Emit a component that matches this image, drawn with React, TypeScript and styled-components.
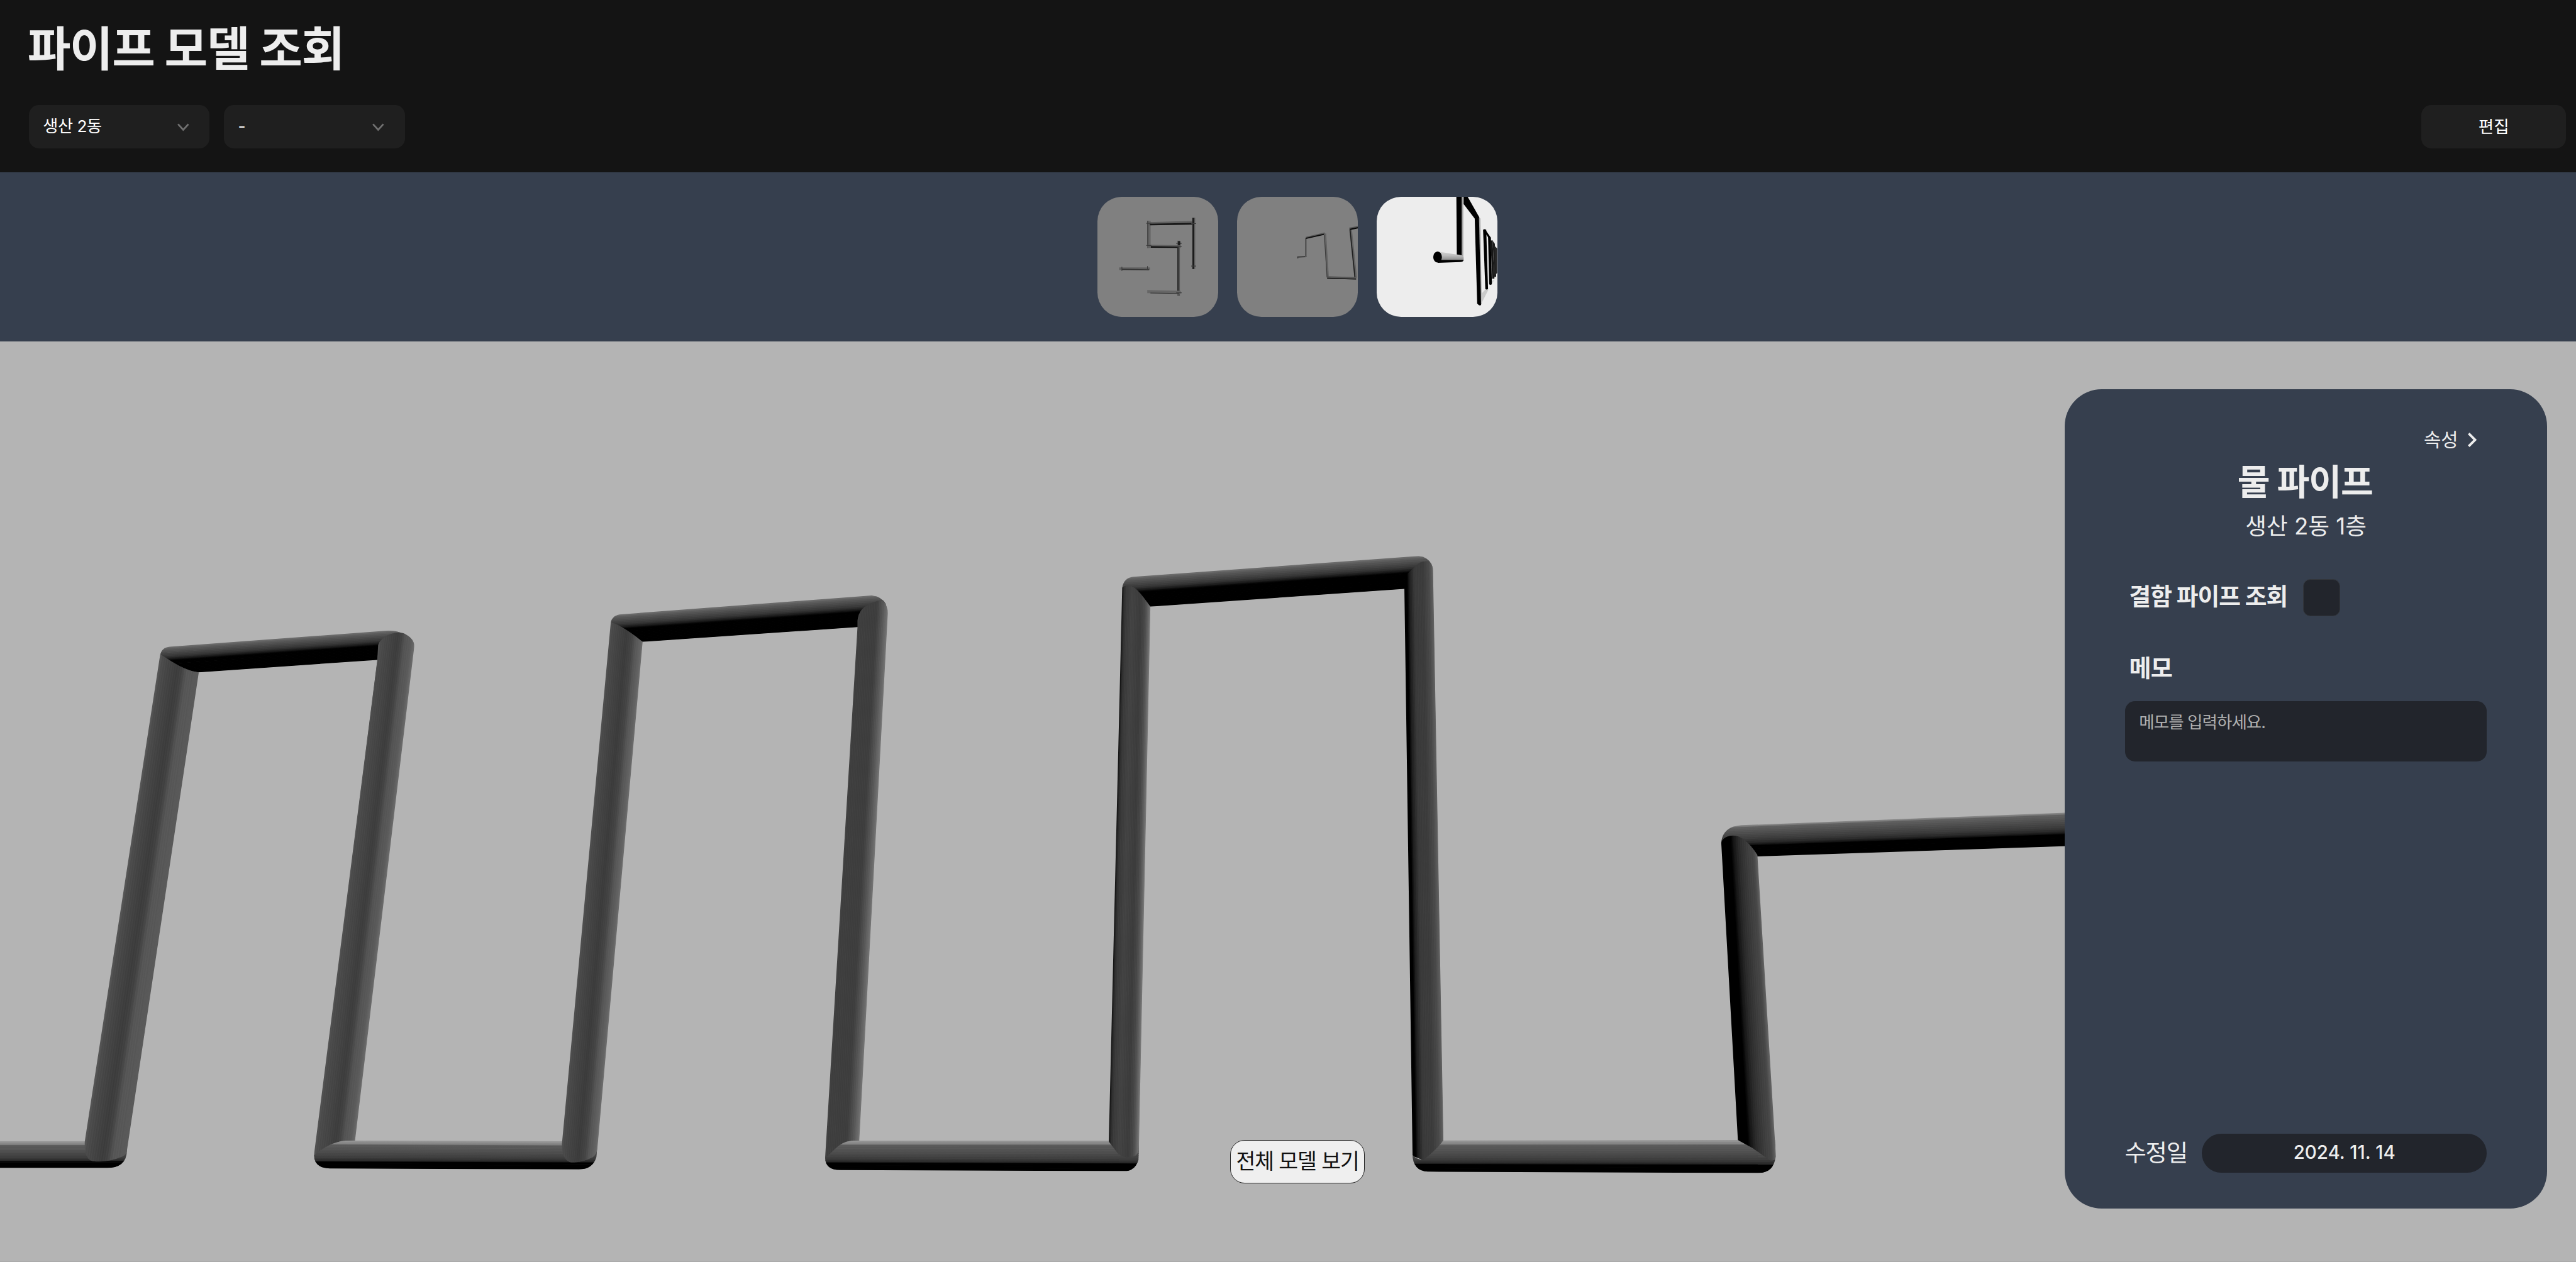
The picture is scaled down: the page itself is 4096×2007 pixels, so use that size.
import React, { useId } from 'react';
import styled, { createGlobalStyle } from 'styled-components';

/* The screen is designed on a 5702px wide board and drawn on a 4096px one. */
const u = (n: number) => `${((n * 4096) / 5702).toFixed(3)}px`;

const color = {
  header: '#141414',
  control: '#1f1f1f',
  navy: '#363f4e',
  field: '#22252c',
  text: '#ededed',
  muted: '#b0b0b0',
  canvas: '#b4b4b4',
};

const GlobalStyle = createGlobalStyle`
  *, *::before, *::after { box-sizing: border-box; }
  html, body { margin: 0; padding: 0; overflow: hidden; background: ${color.header}; }
  body, button, textarea { font-family: Inter, "Noto Sans CJK KR", sans-serif; }
`;

const Page = styled.div`
  width: 100vw;
  height: 100vh;
  display: flex;
  flex-direction: column;
  color: ${color.text};
  overflow: hidden;
`;

/* ---------- typography ---------- */

const Text = styled.span<{ $size: number; $line: number; $weight?: number; $track?: number }>`
  display: block;
  white-space: nowrap;
  font-size: ${p => u(p.$size)};
  line-height: ${p => u(p.$line)};
  font-weight: ${p => p.$weight ?? 400};
  letter-spacing: ${p => u(p.$track ?? 0)};
`;

/* ---------- header ---------- */

const Header = styled.header`
  flex: none;
  height: ${u(382)};
  padding: ${u(48)} ${u(22)} 0 ${u(64)};
  background: ${color.header};
`;

const PageTitle = styled(Text).attrs({ as: 'h1' })`
  margin: 0 0 ${u(61)} ${u(-3)};
`;

const Toolbar = styled.div`
  display: flex;
  justify-content: space-between;
`;

const Filters = styled.div`
  display: flex;
  gap: ${u(32)};
`;

const SelectBox = styled.button`
  display: flex;
  align-items: center;
  justify-content: space-between;
  width: ${u(400)};
  height: ${u(96)};
  padding: 0 ${u(46)} 0 ${u(31)};
  border: 0;
  border-radius: ${u(22)};
  background: ${color.control};
  color: #fff;
`;

const EditButton = styled.button`
  display: flex;
  align-items: center;
  justify-content: center;
  width: ${u(320)};
  height: ${u(96)};
  padding: 0;
  border: 0;
  border-radius: ${u(22)};
  background: ${color.control};
  color: #fff;
`;

const DownIcon = styled.svg`
  width: ${u(26)};
  height: ${u(18)};
  margin-top: ${u(3)};
  fill: none;
  stroke: #707070;
  stroke-width: 3.8;
`;

/* ---------- thumbnails ---------- */

const ThumbBar = styled.nav`
  flex: none;
  display: flex;
  justify-content: center;
  align-items: center;
  gap: ${u(42.4)};
  height: ${u(374)};
  padding: 0 0 0 ${u(42)};
  background: ${color.navy};
`;

const Thumb = styled.button<{ $active?: boolean }>`
  width: ${u(266.6)};
  height: ${u(266.6)};
  padding: 0;
  border: 0;
  border-radius: ${u(54)};
  overflow: hidden;
  background: ${p => (p.$active ? '#ededed' : '#808080')};
`;

const Sketch = styled.svg`
  display: block;
  width: 100%;
  height: 100%;
`;

/* ---------- viewer ---------- */

const Viewer = styled.main`
  position: relative;
  flex: 1;
  display: flex;
  justify-content: flex-end;
  align-items: flex-start;
  padding: ${u(106)} ${u(63.5)} 0 0;
  background: ${color.canvas};
  border-bottom: 1px solid #a8a8a8;
`;

const Scene = styled.svg`
  position: absolute;
  left: 0;
  top: 0;
  width: ${u(5702)};
  height: ${u(2038)};
`;

const WholeModelButton = styled.button`
  position: absolute;
  left: ${u(2722.5)};
  bottom: ${u(173)};
  display: flex;
  align-items: center;
  justify-content: center;
  width: ${u(299)};
  height: ${u(96)};
  padding: ${u(2)} 0 0;
  border: 1.4px solid #222;
  border-radius: ${u(32)};
  background: #efefef;
  color: #111;
`;

const Panel = styled.aside`
  position: relative;
  display: flex;
  flex-direction: column;
  width: ${u(1068.5)};
  height: ${u(1814)};
  padding: ${u(82)} ${u(134)} ${u(80)};
  border-radius: ${u(82)};
  background: ${color.navy};
`;

const PanelToggle = styled.div`
  display: flex;
  justify-content: flex-end;
  align-items: center;
  gap: ${u(21.5)};
  padding-right: ${u(22)};
`;

const NextIcon = styled.svg`
  width: ${u(20)};
  height: ${u(32)};
  fill: ${color.text};
`;

const Heading = styled.div`
  display: flex;
  flex-direction: column;
  align-items: center;
  gap: ${u(23)};
  margin-top: ${u(19)};
`;

const PanelTitle = styled(Text).attrs({ as: 'h2' })`
  margin: 0 ${u(4)} 0 0;
`;

const CheckRow = styled.label`
  display: flex;
  align-items: center;
  gap: ${u(35)};
  height: ${u(83)};
  margin-top: ${u(85.5)};
  padding-left: ${u(9)};
`;

const CheckLabel = styled(Text)`
  margin-top: ${u(-6)};
`;

const CheckBox = styled.span`
  width: ${u(82)};
  height: ${u(82)};
  border: ${u(2)} solid #34373c;
  border-radius: ${u(16)};
  background: ${color.field};
`;

const MemoLabel = styled(Text)`
  margin: ${u(85)} 0 ${u(43)} ${u(9)};
`;

const MemoField = styled.div`
  height: ${u(134)};
  padding: ${u(25)} ${u(31)};
  border-radius: ${u(22)};
  background: ${color.field};
  color: ${color.muted};
`;

const PanelFooter = styled.div`
  display: flex;
  align-items: center;
  justify-content: space-between;
  margin-top: auto;
`;

const FooterLabel = styled(Text)`
  margin-left: ${u(-1)};
`;

const DatePill = styled.div`
  display: flex;
  align-items: center;
  justify-content: center;
  width: ${u(630.5)};
  height: ${u(86)};
  padding-bottom: ${u(4)};
  border-radius: ${u(43)};
  background: ${color.field};
`;

/* ---------- pipe rendering ---------- */

type Pt = [number, number];
type Ramp = [number, number][];

interface PipeSpec {
  /** outline of the visible part */
  clip: string;
  /** the two long edges, each from start to end */
  a: [Pt, Pt];
  b: [Pt, Pt];
  ramp: Ramp;
}

const STRIPS = 36;

const shade = (ramp: Ramp, t: number) => {
  for (let i = 1; i < ramp.length; i++) {
    const [t1, v1] = ramp[i];
    if (t <= t1) {
      const [t0, v0] = ramp[i - 1];
      return v0 + ((v1 - v0) * (t - t0)) / (t1 - t0 || 1);
    }
  }
  return ramp[ramp.length - 1][1];
};

const mix = (p: Pt, q: Pt, t: number): Pt => [p[0] + (q[0] - p[0]) * t, p[1] + (q[1] - p[1]) * t];

function Pipe({ clip, a, b, ramp }: PipeSpec) {
  const id = useId().replace(/[^a-zA-Z0-9]/g, '');
  const strips = Array.from({ length: STRIPS }, (_, i) => {
    const t = i / STRIPS;
    const base = shade(ramp, t + 0.5 / STRIPS);
    const grain = base > 30 && t < 0.85 ? (i % 2 ? 2 : -2) : 0;
    const v = Math.max(0, Math.round(base + grain));
    const from = i === 0 ? -0.08 : t;
    // neighbours overlap slightly so that no seam shows between them
    const to = i === STRIPS - 1 ? 1.1 : Math.min(t + 1.6 / STRIPS, 1);
    const pts = [mix(a[0], b[0], from), mix(a[1], b[1], from), mix(a[1], b[1], to), mix(a[0], b[0], to)];
    return <polygon key={i} points={pts.map(q => q.join(',')).join(' ')} fill={`rgb(${v},${v},${v})`} />;
  });
  return (
    <g>
      <clipPath id={id}>
        <path d={clip} />
      </clipPath>
      <g clipPath={`url(#${id})`}>{strips}</g>
    </g>
  );
}

const floorRamp: Ramp = [[0, 155], [0.07, 138], [0.13, 124], [0.15, 92], [0.4, 78], [0.6, 62], [0.73, 40], [0.75, 0], [1, 0]];
const roofRamp: Ramp = [[0, 112], [0.08, 92], [0.2, 74], [0.34, 54], [0.44, 26], [0.49, 4], [0.5, 0], [1, 0]];
const lastRoofRamp: Ramp = [[0, 145], [0.07, 96], [0.25, 78], [0.45, 58], [0.57, 38], [0.63, 16], [0.65, 0], [1, 0]];

const pipes: PipeSpec[] = [
  // first floor run
  {
    clip: 'M0,2526.5 H281 V2547 Q280,2586 236,2586 H0Z',
    a: [[0, 2527], [290, 2527]], b: [[0, 2586], [290, 2586]], ramp: floorRamp,
  },
  // first arch
  {
    clip: 'M354.6,1451 Q358,1433 376,1431.8 L861,1396 Q896,1397 912,1420 L900,1450 L835.5,1461 L440,1488.5 C405,1487 372,1460 354.6,1451Z',
    a: [[355, 1433.4], [917, 1391.9]], b: [[355, 1494.4], [917, 1455.3]], ramp: roofRamp,
  },
  {
    clip: 'M354.6,1449 C372,1458 405,1485 440,1488.5 L281,2547 Q280,2556 272,2560 Q235,2575 205,2571 Q186,2566 187.5,2528Z',
    a: [[354.6, 1449], [180.2, 2575]], b: [[446, 1449], [276.8, 2575]],
    ramp: [[0, 90], [0.05, 78], [0.2, 70], [0.45, 61], [0.58, 66], [0.66, 80], [0.72, 87], [1, 90]],
  },
  {
    clip: 'M835,1463 L837,1428 Q843,1412 864,1404 Q880,1399 893,1402 Q917,1413 917,1431 L786,2524 V2545 L698,2570 L695,2557Z',
    a: [[841, 1396], [694.2, 2563]], b: [[921, 1396], [781.4, 2563]],
    ramp: [[0, 84], [0.06, 76], [0.25, 70], [0.5, 61], [0.62, 68], [0.72, 84], [0.9, 92], [1, 108]],
  },
  {
    clip: 'M696,2558 C715,2541 740,2525 775,2525 L1322,2527 V2541 L1320,2562 Q1312,2589 1281.6,2589 L730,2587 Q695,2586 695,2557Z',
    a: [[690, 2525], [1325, 2527.5]], b: [[690, 2587], [1325, 2589]], ramp: floorRamp,
  },
  // second arch
  {
    clip: 'M1352,1378 Q1356,1361 1376,1360 L1929.6,1318.5 Q1952,1321 1961,1338 L1950,1380 L1898,1388.5 L1422,1421Z',
    a: [[1350, 1362], [1966, 1315.8]], b: [[1350, 1426], [1966, 1383.9]], ramp: roofRamp,
  },
  {
    clip: 'M1352,1378 Q1375,1383 1422.4,1421 L1322.4,2541 Q1321,2556 1312,2562 Q1285,2576 1262,2573 Q1243,2566 1243.9,2532Z',
    a: [[1352.8, 1370], [1239.4, 2580]], b: [[1427, 1370], [1319, 2580]],
    ramp: [[0, 82], [0.06, 74], [0.3, 66], [0.5, 60], [0.68, 70], [0.8, 88], [0.93, 98], [1, 110]],
  },
  {
    clip: 'M1898,1390 V1374 Q1901,1345 1930,1335 Q1944,1328 1955,1331 Q1966,1342 1965,1361 L1902,2524 V2545 L1830,2572 L1826.5,2562Z',
    a: [[1901.2, 1320], [1826, 2570]], b: [[1967.2, 1320], [1899.5, 2570]],
    ramp: [[0, 68], [0.05, 63], [0.5, 62], [0.62, 62], [0.8, 84], [0.93, 104], [1, 118]],
  },
  {
    clip: 'M1828,2563 C1845,2550 1858,2526 1890,2525.5 H2521 V2536 L2520,2568 Q2512,2593 2488,2593 L1860,2590.5 Q1826,2590 1826.5,2562Z',
    a: [[1820, 2525.5], [2525, 2525]], b: [[1820, 2590], [2525, 2593]], ramp: floorRamp,
  },
  // third arch
  {
    clip: 'M2484,1301 Q2488,1279 2509.7,1277 L3140.4,1231 Q3161,1233 3169,1250 L3160,1296 L3108.6,1303.8 L2546,1343Z',
    a: [[2484, 1278.9], [3172, 1228.7]], b: [[2484, 1347.4], [3172, 1299.4]], ramp: roofRamp,
  },
  {
    clip: 'M2484,1301 C2504,1288 2518,1303 2546.4,1343 L2521,2536 Q2521,2555 2512,2559 Q2490,2568 2474,2553 L2454.3,2527Z',
    a: [[2484.3, 1290], [2453.1, 2575]], b: [[2547.5, 1290], [2520.2, 2575]],
    ramp: [[0, 14], [0.06, 44], [0.14, 58], [0.35, 67], [0.65, 60], [0.8, 72], [0.9, 92], [1, 122]],
  },
  {
    clip: 'M3108.6,1304 L3113,1272 L3142,1246 Q3156,1241 3165,1245 Q3172,1252 3172,1264 L3195,2527 L3160,2572 L3126.7,2559Z',
    a: [[3107.7, 1240], [3126.9, 2570]], b: [[3171.6, 1240], [3195.8, 2570]],
    ramp: [[0, 0], [0.1, 0], [0.17, 28], [0.35, 58], [0.5, 60], [0.65, 60], [0.85, 74], [1, 98]],
  },
  {
    clip: 'M3126.7,2557 Q3138,2570 3152,2567 Q3180,2545 3195,2525 L3930,2524 V2562 Q3926,2597 3892,2597 L3160,2594 Q3128,2592 3126.7,2557Z',
    a: [[3120, 2525], [3935, 2524]], b: [[3120, 2594], [3935, 2597]], ramp: floorRamp,
  },
  // last riser
  {
    clip: 'M3810,1866 Q3813,1830 3855,1827 L4600,1798.3 V1872.5 L3890,1896Z',
    a: [[3810, 1828.8], [4600, 1798.3]], b: [[3810, 1898.6], [4600, 1872.5]], ramp: lastRoofRamp,
  },
  {
    clip: 'M3810,1866 Q3814,1852 3836,1850 Q3862,1850 3890,1893 L3931,2561 Q3929,2572 3918,2569 L3880,2542 L3846.8,2524Z',
    a: [[3808.7, 1840], [3851, 2600]], b: [[3886.9, 1840], [3932.3, 2600]],
    ramp: [[0, 0], [0.27, 0], [0.36, 24], [0.5, 44], [0.7, 60], [0.9, 72], [1, 100]],
  },
];

function PipeScene() {
  return (
    <Scene viewBox="0 756 5702 2038" preserveAspectRatio="none">
      {pipes.map((p, i) => (
        <Pipe key={i} {...p} />
      ))}
    </Scene>
  );
}

/* ---------- thumbnail sketches ---------- */

const PlanSketch = () => (
  <Sketch viewBox="0 0 266 266">
    <g fill="#5f5f5f">
      <rect x="110" y="53" width="7.5" height="60" fill="#666" />
      <rect x="110" y="53" width="2.5" height="60" fill="#424242" />
      <polygon points="114,56 214,53 214,61 114,63" />
      <polygon points="116,59.5 210,57.5 210,61.5 116,63" fill="#161616" />
      <rect x="209" y="46" width="7" height="113.5" fill="#616161" />
      <rect x="210" y="47" width="3.4" height="112.5" fill="#161616" />
      <polygon points="110,106 184,107 184,113 110,112.5" />
      <polygon points="118,109 178,110 178,113 118,112.5" fill="#121212" />
      <rect x="176.5" y="97" width="5.6" height="122" fill="#565656" />
      <rect x="176.5" y="110" width="2.6" height="102" fill="#262626" />
      <rect x="48" y="156" width="68" height="5.6" />
      <polygon points="54,159 114,160 114,162 54,161.4" fill="#333" />
      <polygon points="110,206 184,207.5 184,214 110,213" fill="#666" />
      <polygon points="117,212 180,213 180,214.2 117,213.2" fill="#333" />
    </g>
    <g stroke="#3c3c3c" strokeWidth="1.6">
      <path d="M108,58.5H119M108,107.5H119M207,59H218M174,103H186M174,110H186M174,212H186M207,153H218M110.5,153V162M54,154.5V163.5" />
    </g>
    <path d="M178,98H183V107H178ZM210,47H214V57H210Z" fill="#1c1c1c" />
  </Sketch>
);

const FrontSketch = () => (
  <Sketch viewBox="0 0 266 266" fill="none">
    <path d="M134,136V133L153,132" stroke="#3e3e3e" strokeWidth="2.6" />
    <path d="M152,133V92" stroke="#606060" strokeWidth="3.6" />
    <path d="M150.8,131V92" stroke="#4a4a4a" strokeWidth="1.2" />
    <path d="M152,90.5L194,80.8" stroke="#555" strokeWidth="4" />
    <path d="M152,91.8L192,82.8" stroke="#0c0c0c" strokeWidth="2.6" />
    <path d="M194.5,81L200.5,178" stroke="#636363" strokeWidth="4.6" />
    <path d="M192.7,84L198.8,178" stroke="#3c3c3c" strokeWidth="1.6" />
    <path d="M199,178L263,180" stroke="#555" strokeWidth="5.4" />
    <path d="M199,180L263,181.8" stroke="#151515" strokeWidth="2" />
    <path d="M250.5,70L262,179" stroke="#636363" strokeWidth="6" />
    <path d="M249.5,72L260.4,178" stroke="#1e1e1e" strokeWidth="2.2" />
    <path d="M248,70L267,66.5" stroke="#555" strokeWidth="3.6" />
    <path d="M250,72L267,68.3" stroke="#080808" strokeWidth="2.8" />
  </Sketch>
);

const SideSketch = () => (
  <Sketch viewBox="0 0 266 266">
    <defs>
      <linearGradient id="stub" x1="0" y1="0" x2="0" y2="1">
        <stop offset="0" stopColor="#d4d4d4" />
        <stop offset="0.35" stopColor="#bdbdbd" />
        <stop offset="0.72" stopColor="#909090" />
        <stop offset="0.76" stopColor="#000" />
        <stop offset="1" stopColor="#000" />
      </linearGradient>
      <linearGradient id="riser" x1="0" x2="1">
        <stop offset="0" stopColor="#000" />
        <stop offset="0.68" stopColor="#000" />
        <stop offset="0.72" stopColor="#808080" />
        <stop offset="1" stopColor="#d0d0d0" />
      </linearGradient>
    </defs>
    <polygon points="176,0 192,0 192,140 188,130 177,128" fill="url(#riser)" />
    <path d="M135,121L174,127Q192,128 192,134V140Q191,144 184,144L135,146Z" fill="url(#stub)" />
    <ellipse cx="134.5" cy="133" rx="9.6" ry="12.3" />
    <polygon points="192,0 201,0 227,46 218,50 192,16" />
    <polygon points="226,46 229,48 232,236 229,240" fill="#a0a0a0" />
    <path d="M216.5,46H226L230.5,239Q226,242 222,235Z" />
    <polygon points="231,236 231.5,214 240,205 247,205" fill="#cbcbcb" />
    <path d="M235,73Q238,70 242,73L246,204Q243,206 240,204Z" />
    <polygon points="241,74 252,90 252,98 241,82" />
    <path d="M246,86L252,90L254.5,193Q251,196 248.5,193Z" />
    <polygon points="254,194 254.5,186 260,183" fill="#cbcbcb" />
    <path d="M251.5,97L256,96L260,181L255,181Z" fill="#161616" />
    <path d="M256,97L261,104L264,176L260,178Z" fill="#1c1c1c" />
    <path d="M260,108L266,114V168L263,172Z" fill="#262626" />
  </Sketch>
);

/* ---------- page ---------- */

const Chevron = () => (
  <DownIcon viewBox="0 0 26 18">
    <path d="M1.5,2L13,14.5L24.5,2" />
  </DownIcon>
);

const filters = ['생산 2동', '-'];

export default function App() {
  return (
    <Page>
      <GlobalStyle />
      <Header>
        <PageTitle $size={104} $line={123} $weight={700} $track={-2.1}>파이프 모델 조회</PageTitle>
        <Toolbar>
          <Filters>
            {filters.map(label => (
              <SelectBox key={label}>
                <Text $size={36.5} $line={48} $track={-0.6}>{label}</Text>
                <Chevron />
              </SelectBox>
            ))}
          </Filters>
          <EditButton>
            <Text $size={37} $line={48}>편집</Text>
          </EditButton>
        </Toolbar>
      </Header>

      <ThumbBar>
        <Thumb><PlanSketch /></Thumb>
        <Thumb><FrontSketch /></Thumb>
        <Thumb $active><SideSketch /></Thumb>
      </ThumbBar>

      <Viewer>
        <PipeScene />
        <WholeModelButton>
          <Text $size={46.7} $line={60} $track={-1.5}>전체 모델 보기</Text>
        </WholeModelButton>
        <Panel>
          <PanelToggle>
            <Text $size={41.3} $line={60}>속성</Text>
            <NextIcon viewBox="8.59 6 7.41 12">
              <path d="M10 6 8.59 7.41 13.17 12l-4.58 4.59L10 18l6-6z" />
            </NextIcon>
          </PanelToggle>
          <Heading>
            <PanelTitle $size={78.4} $line={90} $weight={700} $track={-1.6}>물 파이프</PanelTitle>
            <Text $size={51} $line={60}>생산 2동 1층</Text>
          </Heading>
          <CheckRow>
            <CheckLabel $size={52.5} $line={60} $weight={700} $track={-1.4}>결함 파이프 조회</CheckLabel>
            <CheckBox />
          </CheckRow>
          <MemoLabel $size={53} $line={60} $weight={700} $track={-1}>메모</MemoLabel>
          <MemoField>
            <Text $size={37} $line={44} $track={-1.4}>메모를 입력하세요.</Text>
          </MemoField>
          <PanelFooter>
            <FooterLabel $size={52} $line={60} $track={-1.6}>수정일</FooterLabel>
            <DatePill>
              <Text $size={41} $line={50} $weight={500}>2024. 11. 14</Text>
            </DatePill>
          </PanelFooter>
        </Panel>
      </Viewer>
    </Page>
  );
}
